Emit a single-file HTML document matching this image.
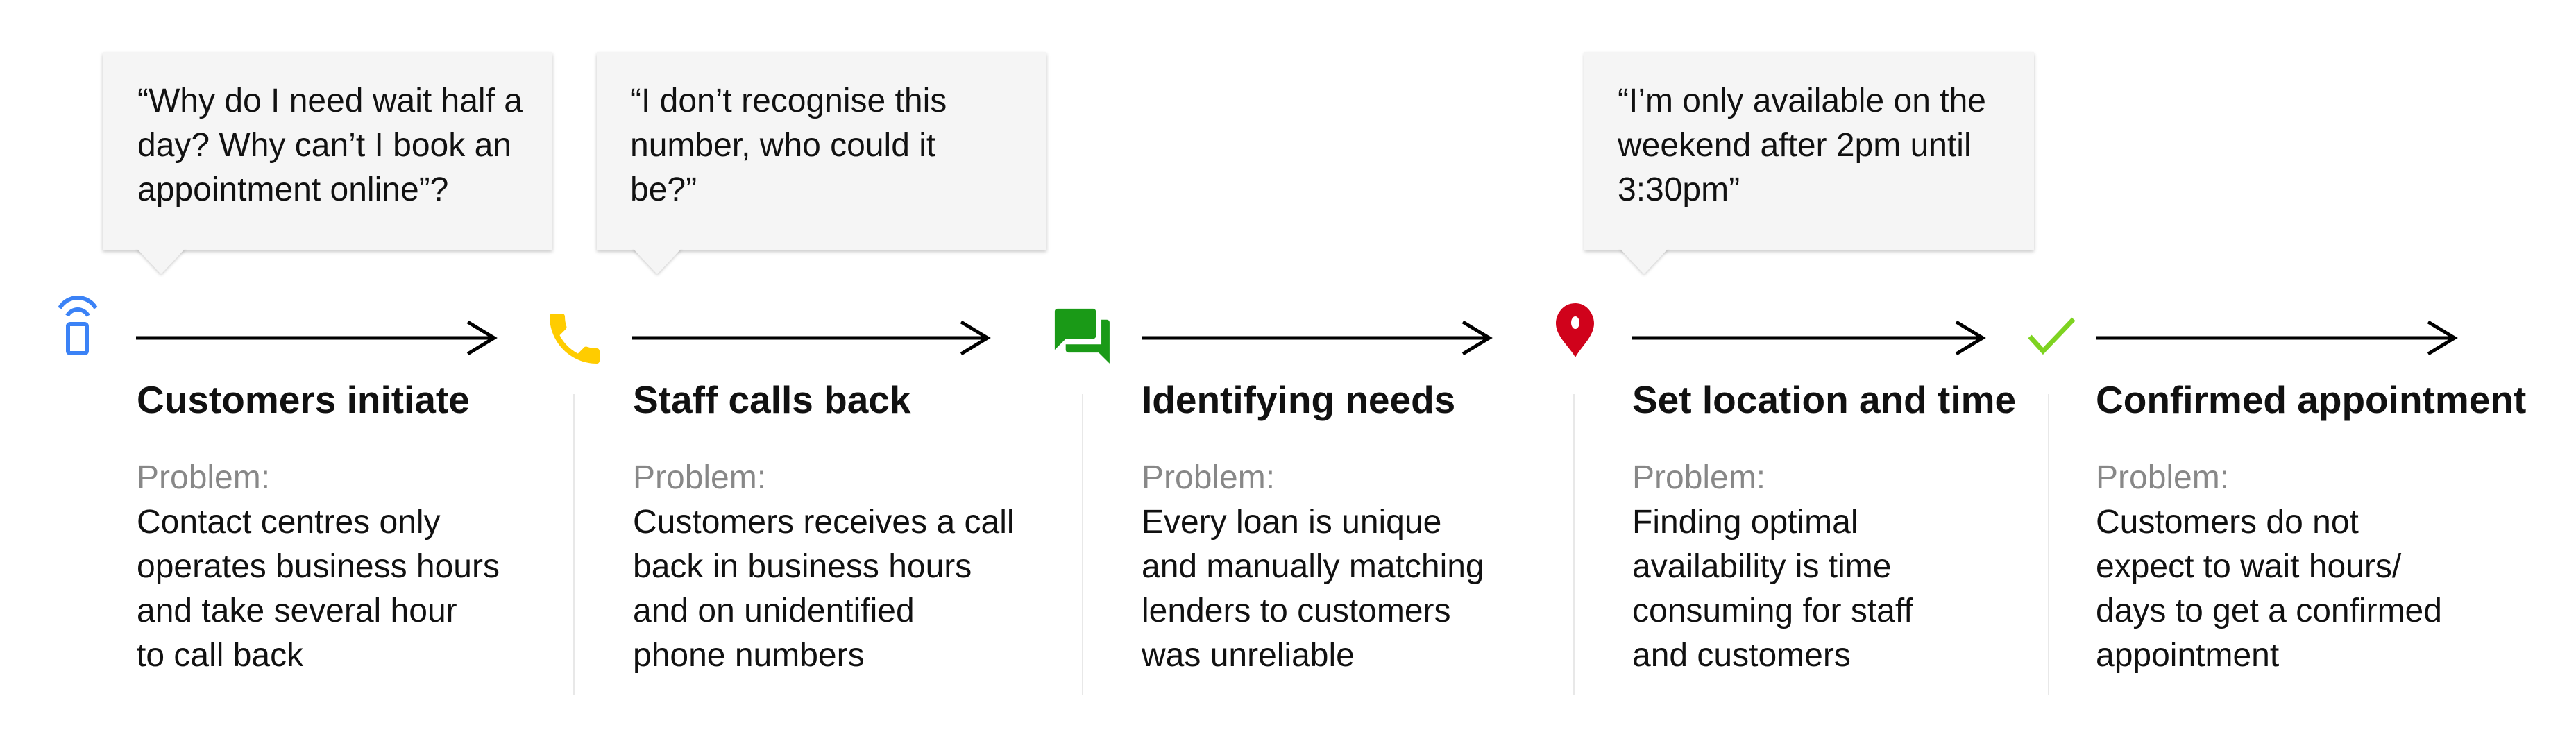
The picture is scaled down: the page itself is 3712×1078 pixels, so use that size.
<!DOCTYPE html>
<html><head><meta charset="utf-8"><style>
html,body{margin:0;padding:0;background:#fff;}
body{width:3712px;height:1078px;position:relative;overflow:hidden;font-family:"Liberation Sans",Arial,sans-serif;color:#111;}
.b{position:absolute;top:75px;height:285px;background:#f5f5f5;box-shadow:0 3px 5px rgba(0,0,0,0.22);}
.bt{position:absolute;top:114px;font-size:48px;line-height:64px;color:#111;white-space:nowrap;}
.t{position:absolute;top:541px;font-size:55px;font-weight:bold;line-height:70px;white-space:nowrap;color:#111;}
.p{position:absolute;top:657px;font-size:48px;line-height:64px;white-space:nowrap;color:#111;}
.p span{color:#888;}
.s{position:absolute;top:568px;width:2px;height:433px;background:#e8e8e8;}
</style></head><body>
<div class="b" style="left:148px;width:648px"></div>
<div class="b" style="left:860px;width:648px"></div>
<div class="b" style="left:2283px;width:648px"></div>
<svg width="3712" height="1078" style="position:absolute;left:0;top:0">
<defs><filter id="sh"><feDropShadow dx="0" dy="2" stdDeviation="2" flood-opacity="0.2"/></filter></defs>
<g fill="#f5f5f5" filter="url(#sh)">
<polygon points="197,358 267,358 232,395"/>
<polygon points="912,358 982,358 947,395"/>
<polygon points="2334,358 2404,358 2369,395"/>
</g>
<g fill="#f5f5f5"><rect x="190" y="350" width="85" height="9"/><rect x="905" y="350" width="85" height="9"/><rect x="2327" y="350" width="85" height="9"/></g>
<g stroke="#000" stroke-width="5" fill="none">
<line x1="196" y1="487" x2="713" y2="487"/><polyline points="674,464 712,487 674,510"/>
<line x1="910" y1="487" x2="1424" y2="487"/><polyline points="1385,464 1423,487 1385,510"/>
<line x1="1645" y1="487" x2="2147" y2="487"/><polyline points="2108,464 2146,487 2108,510"/>
<line x1="2352" y1="487" x2="2858" y2="487"/><polyline points="2819,464 2857,487 2819,510"/>
<line x1="3020" y1="487" x2="3538" y2="487"/><polyline points="3499,464 3537,487 3499,510"/>
</g>
<g fill="none" stroke="#3b82f6" stroke-width="6">
<rect x="98" y="467" width="27" height="42" rx="3"/>
<path d="M86,444 A30,30 0 0 1 138,444"/>
<path d="M97,455 A17,17 0 0 1 127,455"/>
</g>
<path transform="translate(780,440) scale(4)" fill="#ffcc00" d="M6.62 10.79c1.44 2.83 3.76 5.14 6.59 6.59l2.2-2.2c.27-.27.67-.36 1.02-.24 1.120.37 2.33.57 3.57.57.55 0 1 .45 1 1V20c0 .55-.45 1-1 1-9.39 0-17-7.61-17-17 0-.55.45-1 1-1h3.5c.55 0 1 .45 1 1 0 1.25.2 2.45.57 3.57.11.35.03.74-.25 1.02l-2.2 2.2z"/>
<path transform="translate(1512,437) scale(3.95)" fill="#1a9a17" d="M21 6h-2v9H6v2c0 .55.45 1 1 1h11l4 4V7c0-.55-.45-1-1-1zm-4 6V3c0-.55-.45-1-1-1H3c-.55 0-1 .45-1 1v14l4-4h10c.55 0 1-.45 1-1z"/>
<path d="M2270,437 C2251,437 2242,454 2242,466 C2242,485 2262,500 2270,515 C2278,500 2297,485 2297,466 C2297,454 2288,437 2270,437 Z" fill="#d0021b"/>
<ellipse cx="2270" cy="465" rx="6" ry="9" fill="#fff"/>
<polyline points="2925,485 2944,506 2988,460" fill="none" stroke="#7ed321" stroke-width="7"/>
</svg>
<div class="bt" style="left:198px">“Why do I need wait half a<br>day? Why can’t I book an<br>appointment online”?</div>
<div class="bt" style="left:908px">“I don’t recognise this<br>number, who could it<br>be?”</div>
<div class="bt" style="left:2331px">“I’m only available on the<br>weekend after 2pm until<br>3:30pm”</div>

<div class="s" style="left:826px"></div>
<div class="s" style="left:1559px"></div>
<div class="s" style="left:2267px"></div>
<div class="s" style="left:2951px"></div>

<div class="t" style="left:197px">Customers initiate</div>
<div class="t" style="left:912px">Staff calls back</div>
<div class="t" style="left:1645px">Identifying needs</div>
<div class="t" style="left:2352px">Set location and time</div>
<div class="t" style="left:3020px">Confirmed appointment</div>

<div class="p" style="left:197px"><span>Problem:</span><br>Contact centres only<br>operates business hours<br>and take several hour<br>to call back</div>
<div class="p" style="left:912px"><span>Problem:</span><br>Customers receives a call<br>back in business hours<br>and on unidentified<br>phone numbers</div>
<div class="p" style="left:1645px"><span>Problem:</span><br>Every loan is unique<br>and manually matching<br>lenders to customers<br>was unreliable</div>
<div class="p" style="left:2352px"><span>Problem:</span><br>Finding optimal<br>availability is time<br>consuming for staff<br>and customers</div>
<div class="p" style="left:3020px"><span>Problem:</span><br>Customers do not<br>expect to wait hours/<br>days to get a confirmed<br>appointment</div>
</body></html>
